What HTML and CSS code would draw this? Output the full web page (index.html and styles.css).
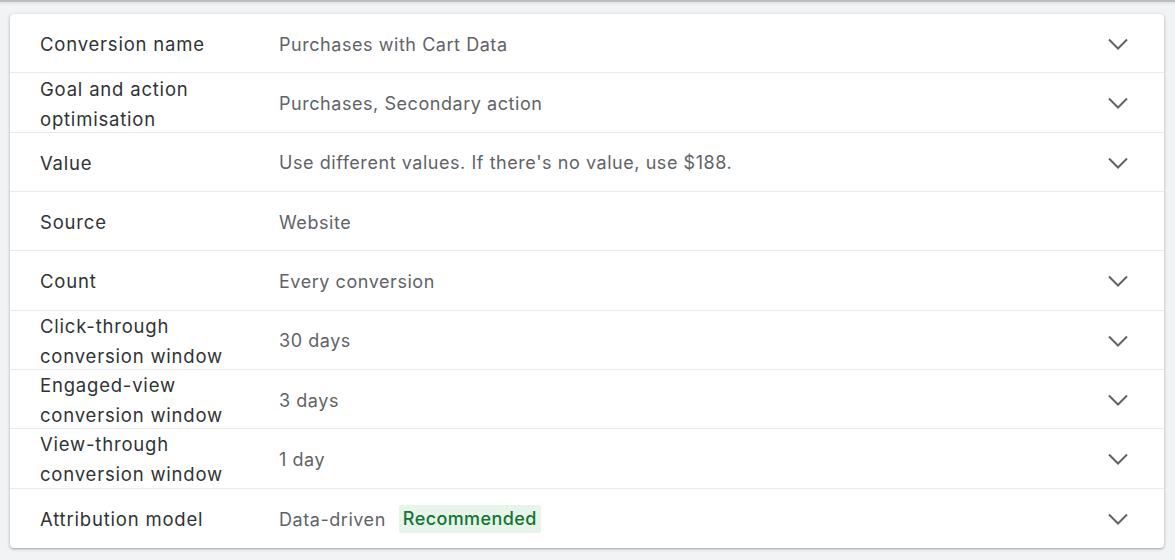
FILE: index.html
```html
<!DOCTYPE html>
<html>
<head>
<meta charset="utf-8">
<link rel="stylesheet" href="styles.css">
</head>
<body>
<div class="topbar"></div>
<div class="page">
  <div class="card">
    <div class="row"><div class="label">Conversion name</div><div class="value">Purchases with Cart Data</div><div class="chev"><svg width="20" height="12" viewBox="0 0 20 12"><polyline points="1,1.5 10,10.5 19,1.5"/></svg></div></div>
    <div class="row"><div class="label">Goal and action optimisation</div><div class="value">Purchases, Secondary action</div><div class="chev"><svg width="20" height="12" viewBox="0 0 20 12"><polyline points="1,1.5 10,10.5 19,1.5"/></svg></div></div>
    <div class="row"><div class="label">Value</div><div class="value">Use different values. If there's no value, use $188.</div><div class="chev"><svg width="20" height="12" viewBox="0 0 20 12"><polyline points="1,1.5 10,10.5 19,1.5"/></svg></div></div>
    <div class="row"><div class="label">Source</div><div class="value">Website</div><div class="chev"></div></div>
    <div class="row"><div class="label">Count</div><div class="value">Every conversion</div><div class="chev"><svg width="20" height="12" viewBox="0 0 20 12"><polyline points="1,1.5 10,10.5 19,1.5"/></svg></div></div>
    <div class="row"><div class="label">Click-through conversion window</div><div class="value">30 days</div><div class="chev"><svg width="20" height="12" viewBox="0 0 20 12"><polyline points="1,1.5 10,10.5 19,1.5"/></svg></div></div>
    <div class="row"><div class="label">Engaged-view conversion window</div><div class="value">3 days</div><div class="chev"><svg width="20" height="12" viewBox="0 0 20 12"><polyline points="1,1.5 10,10.5 19,1.5"/></svg></div></div>
    <div class="row"><div class="label">View-through conversion window</div><div class="value">1 day</div><div class="chev"><svg width="20" height="12" viewBox="0 0 20 12"><polyline points="1,1.5 10,10.5 19,1.5"/></svg></div></div>
    <div class="row"><div class="label">Attribution model</div><div class="value">Data-driven <span class="badge">Recommended</span></div><div class="chev"><svg width="20" height="12" viewBox="0 0 20 12"><polyline points="1,1.5 10,10.5 19,1.5"/></svg></div></div>
  </div>
</div>
</body>
</html>
```

FILE: styles.css
```css
* { box-sizing: border-box; }
html, body {
  margin: 0;
  padding: 0;
  background: #f1f3f4;
  font-family: Inter, "Open Sans", Arial, sans-serif;
}
.topbar {
  height: 6px;
  border-top: 2px solid #bdbdbd;
  background: linear-gradient(#e2e3e4, #f1f3f4);
}
.page {
  padding: 8px 11px 12px 10px;
}
.card {
  background: #fff;
  border-radius: 4px;
  box-shadow: 0 1px 2px rgba(60,64,67,0.3), 0 1px 3px 1px rgba(60,64,67,0.12);
}
.row {
  display: flex;
  align-items: center;
  height: 59.33px;
  border-bottom: 1px solid #e8eaed;
  padding-top: 2px;
  padding-left: 30px;
  padding-right: 36px;
}
.row:last-child { border-bottom: none; }
.label {
  width: 239px;
  padding-right: 30px;
  flex-shrink: 0;
  font-size: 18.5px;
  font-weight: 400;
  letter-spacing: 0.8px;
  line-height: 30px;
  color: #303336;
}
.value {
  flex: 1;
  font-size: 18px;
  letter-spacing: 0.55px;
  color: #5f6368;
  display: flex;
  align-items: center;
  gap: 13px;
}
.badge {
  background: #e6f4ea;
  color: #137333;
  font-weight: 500;
  letter-spacing: 0.4px;
  padding: 3px 4px;
  border-radius: 3px;
  line-height: 22px;
}
.chev {
  width: 20px;
  height: 12px;
  display: flex;
}
.chev svg polyline {
  fill: none;
  stroke: #5f6368;
  stroke-width: 2;
}
```
